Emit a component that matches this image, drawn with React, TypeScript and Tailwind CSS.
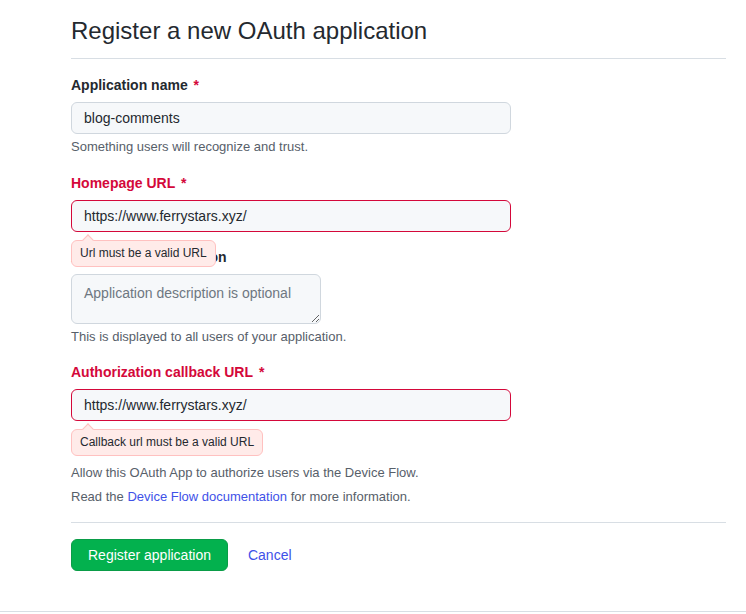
import React from "react";

function ErrorTip({ text }: { text: string }) {
  return (
    <div className="absolute left-0 top-[calc(100%+8px)] z-10 rounded-md border border-[#ffc1c0] bg-[#ffebe9] px-2 py-1 text-xs leading-[17px] text-[#24292f]">
      <div className="absolute -top-[5px] left-3 h-2 w-2 rotate-45 border-l border-t border-[#ffc1c0] bg-[#ffebe9]" />
      <span className="relative">{text}</span>
    </div>
  );
}

function Label({ children, error, required }: { children: React.ReactNode; error?: boolean; required?: boolean }) {
  return (
    <label className={`mb-[7px] block text-sm font-bold leading-5 ${error ? "text-[#d4083a]" : "text-[#24292f]"}`}>
      {children}
      {required && <span className="ml-[2px] text-[#d4083a]"> *</span>}
    </label>
  );
}

const inputBase =
  "h-8 w-[440px] rounded-md border bg-[#f6f8fa] px-3 text-sm text-[#24292f] outline-none";

export default function App() {
  return (
    <div className="bg-white font-['Liberation_Sans',Arial,sans-serif] text-[#24292f]">
      <div className="ml-[71px] w-[655px]">
        <div className="mt-4 mb-4 border-b border-[#d8dee4] pb-3">
          <h1 className="text-2xl font-normal leading-[30px]">Register a new OAuth application</h1>
        </div>

        <form>
          <div>
            <Label required>Application name</Label>
            <input className={`${inputBase} border-[#d0d7de]`} defaultValue="blog-comments" />
            <p className="mt-1 text-[13px] leading-[18px] text-[#57606a]">Something users will recognize and trust.</p>
          </div>

          <div className="mt-[17px]">
            <Label required error>
              Homepage URL
            </Label>
            <div className="relative">
              <input className={`${inputBase} border-[#d4083a]`} defaultValue="https://www.ferrystars.xyz/" />
              <ErrorTip text="Url must be a valid URL" />
            </div>
          </div>

          <div className="mt-[15px]">
            <Label>Application description</Label>
            <textarea
              className="block h-[50px] w-[250px] rounded-md border border-[#d0d7de] bg-[#f6f8fa] px-3 py-2 text-sm leading-5 text-[#24292f] outline-none placeholder:text-[#6e7781]"
              placeholder="Application description is optional"
            />
            <p className="mt-1 text-[13px] leading-[18px] text-[#57606a]">This is displayed to all users of your application.</p>
          </div>

          <div className="mt-4">
            <Label required error>
              Authorization callback URL
            </Label>
            <div className="relative">
              <input className={`${inputBase} border-[#d4083a]`} defaultValue="https://www.ferrystars.xyz/" />
              <ErrorTip text="Callback url must be a valid URL" />
            </div>
          </div>

          {/* device flow checkbox sits under the callback error tip */}
          <div className="mt-[43px]">
            <p className="text-[13px] leading-[18px] text-[#57606a]">
              Allow this OAuth App to authorize users via the Device Flow.
            </p>
            <p className="mt-[6px] text-[13px] leading-[18px] text-[#57606a]">
              Read the <a href="#" className="text-[#4051e8]">Device Flow documentation</a> for more information.
            </p>
          </div>

          <div className="mt-4 flex items-center border-t border-[#d8dee4] pt-4">
            <button
              type="button"
              className="h-8 rounded-md border border-[#0a9c47] bg-[#03b14e] px-4 text-sm leading-5 text-white"
            >
              Register application
            </button>
            <a href="#" className="ml-5 text-sm text-[#4051e8]">
              Cancel
            </a>
          </div>
        </form>
      </div>

      <div className="mt-10 h-[2px] border-t border-[#d8dee4]" />
    </div>
  );
}
